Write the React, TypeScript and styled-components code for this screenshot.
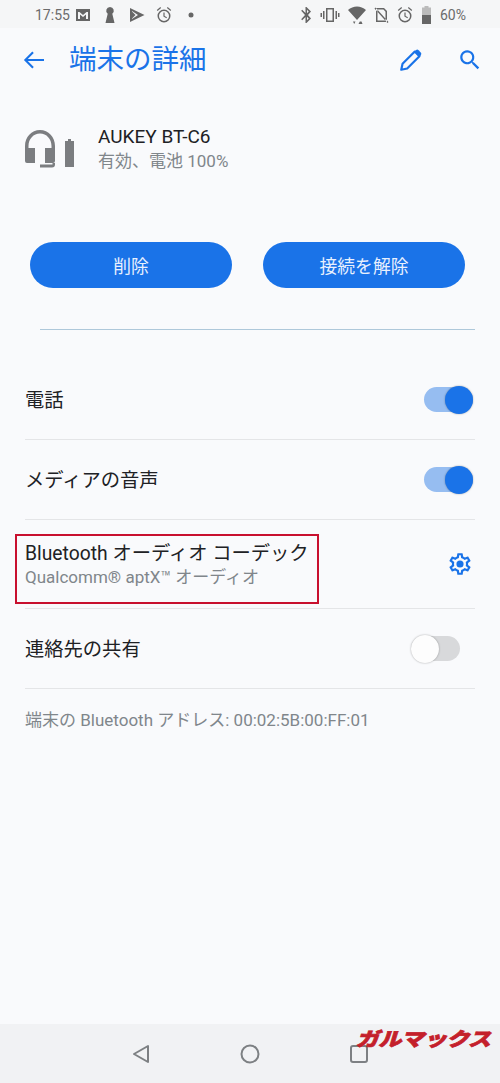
import React from "react";
import styled, { createGlobalStyle } from "styled-components";

const Blue = "#1a73e8";

const GlobalStyle = createGlobalStyle`
    html, body {
        margin: 0;
        padding: 0;
        background: #f9fafc;
    }
    body {
        font-family: Roboto, "Noto Sans CJK JP", sans-serif;
    }
`;

// =============================================================================
// STYLING
// =============================================================================
const Page = styled.div`
    position: relative;
    width: 500px;
    height: 1083px;
    display: flex;
    flex-direction: column;
    overflow: hidden;
    background: #f9fafc;
`;

const StatusBar = styled.div`
    height: 28px;
    flex: none;
    display: flex;
    align-items: center;
    justify-content: space-between;
    padding: 2px 34px 0 35px;
    box-sizing: border-box;
    background: #f5f6f7;
    color: #6b6b6b;
    font-size: 14px;
`;

const StatusLeft = styled.div`
    display: flex;
    align-items: center;
    gap: 5px;
`;

const StatusIcons = styled.div<{ $gap: number }>`
    display: flex;
    align-items: center;
    gap: ${(p) => p.$gap}px;
`;

const AppBar = styled.div`
    height: 63px;
    flex: none;
    display: flex;
    align-items: center;
    padding: 0 17px 0 22px;
    color: ${Blue};
`;

const Title = styled.h1`
    margin: 0 0 0 23px;
    flex: 1;
    font-size: 27.5px;
    font-weight: 400;
    line-height: 36px;
`;

const AppBarIcon = styled.svg`
    margin-left: 33px;
    width: 26px;
    height: 26px;
    fill: ${Blue};
`;

const Device = styled.div`
    margin-top: 12px;
    height: 91px;
    flex: none;
    display: flex;
    align-items: center;
    padding-left: 24px;
`;

const DeviceText = styled.div`
    margin-left: 23px;
`;

const DeviceName = styled.div`
    font-size: 19px;
    line-height: 25px;
    color: #202124;
`;

const Secondary = styled.div`
    font-size: 17px;
    line-height: 24px;
    color: #80868b;
`;

const Actions = styled.div`
    margin-top: 48px;
    flex: none;
    display: flex;
    justify-content: space-between;
    padding: 0 35px 0 30px;
`;

const PillButton = styled.div`
    width: 202px;
    height: 46px;
    border-radius: 23px;
    display: flex;
    align-items: center;
    justify-content: center;
    background: ${Blue};
    color: #e8f0fe;
    font-size: 17.8px;
`;

const BlueRule = styled.div`
    margin: 41px 25px 30px 40px;
    height: 1px;
    flex: none;
    background: #aec8da;
`;

const Row = styled.div<{ $height: number }>`
    height: ${(p) => p.$height}px;
    flex: none;
    margin: 0 25px;
    display: flex;
    align-items: center;
    justify-content: space-between;
    border-bottom: 1px solid #e4e5e7;
`;

const RowLabel = styled.div`
    font-size: 19.3px;
    line-height: 26px;
    color: #202124;
`;

const SwitchLabel = styled(RowLabel)`
    margin-top: 2px;
`;

const CodecText = styled.div`
    position: relative;
    margin-top: 1px;
`;

const CodecDetail = styled(Secondary)`
    line-height: 21px;
`;

const Highlight = styled.div`
    position: absolute;
    left: -10px;
    top: -7px;
    width: 304px;
    height: 70px;
    box-sizing: border-box;
    border: 2px solid #c8102e;
`;

const Track = styled.div<{ $on: boolean }>`
    position: relative;
    width: 49px;
    height: 25px;
    border-radius: 13px;
    margin-right: ${(p) => (p.$on ? 2 : 15)}px;
    background: ${(p) => (p.$on ? "#96bdf1" : "#d8d9db")};
`;

const Knob = styled.div<{ $on: boolean }>`
    position: absolute;
    top: -1px;
    ${(p) => (p.$on ? "right: 0;" : "left: 0;")}
    width: 28px;
    height: 28px;
    border-radius: 50%;
    background: ${(p) => (p.$on ? Blue : "#fdfdfd")};
    box-shadow: 0 0 2px rgba(0, 0, 0, 0.35);
`;

const GearIcon = styled.svg`
    width: 26px;
    height: 26px;
    margin-right: 2px;
    fill: ${Blue};
`;

const Address = styled(Secondary)`
    margin: 19px 0 0 25px;
`;

const NavBar = styled.div`
    margin-top: auto;
    height: 59px;
    flex: none;
    display: flex;
    align-items: center;
    background: #f1f2f4;
    padding-left: 131px;
    gap: 89px;
`;

const NavIcon = styled.svg`
    width: 20px;
    height: 20px;
    fill: none;
    stroke: #7d8083;
    stroke-width: 2;
    stroke-linejoin: round;
`;

const Watermark = styled.div`
    position: absolute;
    right: 10px;
    top: 1028px;
    font-size: 19px;
    line-height: 24px;
    font-weight: 900;
    font-style: italic;
    letter-spacing: -0.5px;
    color: #c4202b;
    -webkit-text-stroke: 0.7px #c4202b;
    transform: scaleX(1.22);
    transform-origin: right center;
`;

const SmallIcon = styled.svg<{ $w?: number }>`
    width: ${(p) => p.$w ?? 16}px;
    height: 18px;
    fill: #666;
`;

// =============================================================================
// COMPONENTS
// =============================================================================
const AlarmIcon = () => (
    <SmallIcon viewBox="0 0 16 18">
        <path d="M8 3.500a6.500 6.500 0 1 0 0 13 6.500 6.500 0 0 0 0-13zm0 1.500a5 5 0 1 1 0 10 5 5 0 0 1 0-10z M7.400 6.500h1.200v3.400l2.400 1.400-.6 1-3-1.800z M.8 4L4.300 1.100l.8 1L1.600 5z M15.200 4L11.700 1.100l-.8 1L14.400 5z" />
    </SmallIcon>
);

const LeftStatusIcons = () => (
    <StatusIcons $gap={11}>
        <SmallIcon viewBox="0 0 16 18">
            <path d="M1 3h14v12H1z M3 6v7h2V8.500l3 2.500 3-2.500V13h2V6h-1.500L8 9 4.500 6z" fillRule="evenodd" />
        </SmallIcon>
        <SmallIcon viewBox="0 0 16 18">
            <path d="M8 1a3.800 3.800 0 0 1 2.300 6.800L12.500 17h-9l2.200-9.200A3.800 3.800 0 0 1 8 1z" />
        </SmallIcon>
        <SmallIcon viewBox="0 0 16 18">
            <path d="M1 2l14.500 7L1 16z M3 5v8L9 9z" fillRule="evenodd" />
            <path d="M3 5.500L6.500 9 3 12.500z" />
        </SmallIcon>
        <AlarmIcon />
        <SmallIcon viewBox="0 0 16 18">
            <circle cx="8" cy="9" r="2.500" />
        </SmallIcon>
    </StatusIcons>
);

const RightStatusIcons = () => (
    <StatusIcons $gap={8}>
        <SmallIcon $w={12} viewBox="0 0 12 18">
            <path d="M5.500 1h1L11 5.500 8 9l3 3.500L6.500 17h-1v-6l-3.300 3.200-1-1L5 9 1.200 4.800l1-1L5.500 7z M7 3.800v3.400l1.700-1.700z M7 10.800v3.400l1.700-1.700z" fillRule="evenodd" />
        </SmallIcon>
        <SmallIcon $w={20} viewBox="0 0 20 18">
            <path d="M6 2h8v14H6z M7.500 3.500v11h5v-11z M3 5h1.500v8H3z M15.500 5H17v8h-1.500z M.5 7H2v4H.5z M18 7h1.500v4H18z" fillRule="evenodd" />
        </SmallIcon>
        <SmallIcon $w={18} viewBox="0 0 18 18">
            <path d="M0 4C5-.7 13-.7 18 4l-9 10z M5 15.500h2.500L6.200 18z M10.500 18l1.300-2.500H13.500l1 2.500z" />
        </SmallIcon>
        <SmallIcon $w={15} viewBox="0 0 15 18">
            <path d="M2 2h8l3 3v11H2z M3.500 3.500v11h8V5.700L9.400 3.500z M.5 2.500l1-1 13 14.500-1 1z" fillRule="evenodd" />
        </SmallIcon>
        <AlarmIcon />
        <SmallIcon $w={11} viewBox="0 0 11 18">
            <path d="M3.500 0h4v1.500H10V18H1V1.500h2.500z" fill="#bbb" />
            <path d="M1 9h9v9H1z" />
        </SmallIcon>
    </StatusIcons>
);

const HeadsetIcon = () => (
    <svg width="51" height="40" viewBox="0 0 51 40" fill="#7b7d80">
        <path d="M16 1C7.500 1 1 8 1 17v2h3.500v-2C4.500 10 9.500 4.500 16 4.500S27.500 10 27.500 17v2H31v-2C31 8 24.500 1 16 1z" />
        <path d="M1 19h10v15H3a2 2 0 0 1-2-2z M21 19h10v13a2 2 0 0 1-2 2h-8z" />
        <path d="M28.500 34H31v1.500a3 3 0 0 1-3 3H16V35.500h12.500z" />
        <path d="M41 12h3v-2h3v2h3v26h-9z" />
    </svg>
);

const Switch = ({ on }: { on: boolean }) => (
    <Track $on={on}>
        <Knob $on={on} />
    </Track>
);

export default function App(): React.JSX.Element {
    return (
        <Page>
            <GlobalStyle />
            <StatusBar>
                <StatusLeft>
                    <span>17:55</span>
                    <LeftStatusIcons />
                </StatusLeft>
                <StatusLeft>
                    <RightStatusIcons />
                    <span>&nbsp;60%</span>
                </StatusLeft>
            </StatusBar>
            <AppBar>
                <svg width="24" height="24" viewBox="0 0 24 24" fill={Blue}>
                    <path d="M22 11H5.800l6-6L10.300 3.600 1.900 12l8.400 8.400 1.500-1.400-6-6H22z" />
                </svg>
                <Title>端末の詳細</Title>
                <AppBarIcon viewBox="0 0 24 24">
                    <path d="M3 21l1.200-5.500L15.500 4.200l4.300 4.300L8.500 19.800z" fill="none" stroke={Blue} strokeWidth="2" strokeLinejoin="round" />
                    <path d="M16.500 3a1.800 1.800 0 0 1 2.500 0l2 2a1.800 1.800 0 0 1 0 2.500L19.500 9 15 4.500z" />
                </AppBarIcon>
                <AppBarIcon viewBox="0 0 24 24">
                    <path d="M15.500 14h-.8l-.3-.3A6.500 6.500 0 1 0 13.700 14.400l.3.300v.8l5 5 1.500-1.500zm-6 0a4.500 4.500 0 1 1 0-9 4.500 4.500 0 0 1 0 9z" />
                </AppBarIcon>
            </AppBar>
            <Device>
                <HeadsetIcon />
                <DeviceText>
                    <DeviceName>AUKEY BT-C6</DeviceName>
                    <Secondary>有効、電池 100%</Secondary>
                </DeviceText>
            </Device>
            <Actions>
                <PillButton>削除</PillButton>
                <PillButton>接続を解除</PillButton>
            </Actions>
            <BlueRule />
            <Row $height={79}>
                <SwitchLabel>電話</SwitchLabel>
                <Switch on />
            </Row>
            <Row $height={79}>
                <SwitchLabel>メディアの音声</SwitchLabel>
                <Switch on />
            </Row>
            <Row $height={88}>
                <CodecText>
                    <Highlight />
                    <RowLabel>Bluetooth オーディオ コーデック</RowLabel>
                    <CodecDetail>Qualcomm® aptX™ オーディオ</CodecDetail>
                </CodecText>
                <GearIcon viewBox="0 0 24 24">
                    <path d="M19.430 12.980c.04-.32.07-.64.07-.98 0-.34-.03-.66-.07-.98l2.110-1.650c.19-.15.24-.42.12-.64l-2-3.460c-.09-.16-.26-.25-.44-.25-.06 0-.12.01-.17.03l-2.490 1c-.52-.4-1.080-.73-1.690-.98l-.38-2.650C14.460 2.180 14.250 2 14 2h-4c-.25 0-.46.18-.49.42l-.38 2.650c-.61.25-1.170.59-1.690.98l-2.490-1c-.06-.02-.12-.03-.18-.03-.17 0-.34.09-.43.25l-2 3.460c-.13.22-.07.49.12.64l2.110 1.650c-.04.32-.07.65-.07.98 0 .33.03.66.07.98l-2.110 1.650c-.19.15-.24.42-.12.64l2 3.460c.09.16.26.25.44.25.06 0 .12-.01.17-.03l2.490-1c.52.4 1.080.73 1.690.98l.38 2.650c.03.24.24.42.49.42h4c.25 0 .46-.18.49-.42l.38-2.650c.61-.25 1.170-.59 1.690-.98l2.490 1c.06.02.12.03.18.03.17 0 .34-.09.43-.25l2-3.460c.12-.22.07-.49-.12-.64l-2.110-1.650zm-1.980-1.710c.04.31.05.52.05.73 0 .21-.02.43-.05.73l-.14 1.130.89.7 1.080.84-.7 1.210-1.270-.51-1.040-.42-.9.68c-.43.32-.84.56-1.250.73l-1.060.43-.16 1.130-.2 1.350h-1.400l-.19-1.350-.16-1.130-1.060-.43c-.43-.18-.83-.41-1.230-.71l-.91-.7-1.060.43-1.270.51-.7-1.210 1.080-.84.89-.7-.14-1.130c-.03-.31-.05-.54-.05-.74s.02-.43.05-.73l.14-1.130-.89-.7-1.080-.84.7-1.210 1.270.51 1.040.42.9-.68c.43-.32.84-.56 1.250-.73l1.060-.43.16-1.130.2-1.350h1.390l.19 1.350.16 1.130 1.060.43c.43.18.83.41 1.230.71l.91.7 1.060-.43 1.270-.51.7 1.210-1.070.85-.89.7.14 1.130z" />
                    <circle cx="12" cy="12" r="3.300" />
                </GearIcon>
            </Row>
            <Row $height={79}>
                <SwitchLabel>連絡先の共有</SwitchLabel>
                <Switch on={false} />
            </Row>
            <Address>端末の Bluetooth アドレス: 00:02:5B:00:FF:01</Address>
            <NavBar>
                <NavIcon viewBox="0 0 20 20">
                    <path d="M17 2v16L3 10z" />
                </NavIcon>
                <NavIcon viewBox="0 0 20 20">
                    <circle cx="10" cy="10" r="8.500" />
                </NavIcon>
                <NavIcon viewBox="0 0 20 20">
                    <rect x="2" y="2" width="16" height="16" rx="2" />
                </NavIcon>
            </NavBar>
            <Watermark>ガルマックス</Watermark>
        </Page>
    );
}
